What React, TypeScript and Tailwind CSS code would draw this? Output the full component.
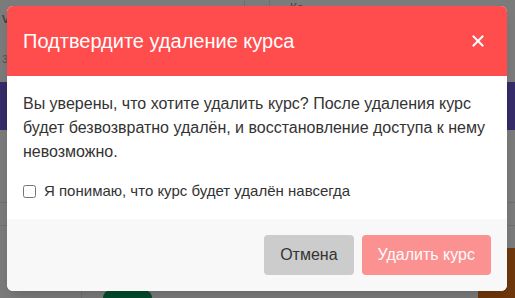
import { useState } from "react";

function CloseIcon() {
  return (
    <svg width="12" height="12" viewBox="0 0 12 12" fill="none" stroke="currentColor" strokeWidth="2" strokeLinecap="square">
      <path d="M1.5 1.5 L10.5 10.5 M10.5 1.5 L1.5 10.5" />
    </svg>
  );
}

export default function App() {
  const [agreed, setAgreed] = useState(false);

  return (
    <div className="relative h-[298px] w-[515px] overflow-hidden bg-[#7b7b7b] font-['Liberation_Sans',Arial,sans-serif]">
      {/* dimmed page behind the modal */}
      <div className="flex h-[82px] text-[#3a3a3a]">
        <div className="w-[245px] border-r border-[#6e6e6e] pl-0.5 pt-2 text-[15px] leading-5">
          <p>vc</p>
          <p className="mt-5 text-sm text-[#555]">з</p>
        </div>
        <div className="w-[25px] border-r border-[#6e6e6e]" />
        <div className="pl-5 pt-0 text-xs text-[#444]">Ка</div>
      </div>
      <div className="h-[48px] bg-[#352c69]" />
      <div className="h-[72px]" />
      <div className="h-[24px] border-y border-[#6f6f6f]" />
      <div className="flex h-[72px] items-end justify-between">
        <div className="flex h-full items-end">
          <div className="h-full w-[82px] border-r border-[#6f6f6f]" />
          <div className="ml-[21px] h-[8px] w-[49px] rounded-t-full bg-[#064a2c]" />
        </div>
        <div className="h-[50px] w-[37px] rounded-tl-xl bg-[#6f370c]" />
      </div>

      {/* modal */}
      <div className="absolute left-[7px] top-[6px] w-[500px] overflow-hidden rounded-md bg-white shadow-lg">
        <div className="flex h-[70px] items-center justify-between bg-[#ff4d4d] px-4 text-white">
          <h2 className="text-[20px] leading-6">Подтвердите удаление курса</h2>
          <button className="mr-px flex h-6 w-6 items-center justify-center text-white">
            <CloseIcon />
          </button>
        </div>
        <div className="p-4 text-[#333]">
          <p className="text-base leading-6">
            Вы уверены, что хотите удалить курс? После удаления курс будет безвозвратно удалён, и восстановление доступа к нему невозможно.
          </p>
          <label className="mt-[15px] flex items-center gap-2 text-[15px] leading-6 text-[#333]">
            <input
              type="checkbox"
              checked={agreed}
              onChange={(e) => setAgreed(e.target.checked)}
              className="m-0 h-[13px] w-[13px]"
            />
            Я понимаю, что курс будет удалён навсегда
          </label>
        </div>
        <div className="flex justify-end gap-2 bg-[#f8f8f8] p-4">
          <button className="h-10 rounded bg-[#cccccc] px-4 text-base text-[#333]">Отмена</button>
          <button
            disabled={!agreed}
            className="h-10 rounded bg-[#ff4d4d] px-4 text-base text-white disabled:opacity-60"
          >
            Удалить курс
          </button>
        </div>
      </div>
    </div>
  );
}
